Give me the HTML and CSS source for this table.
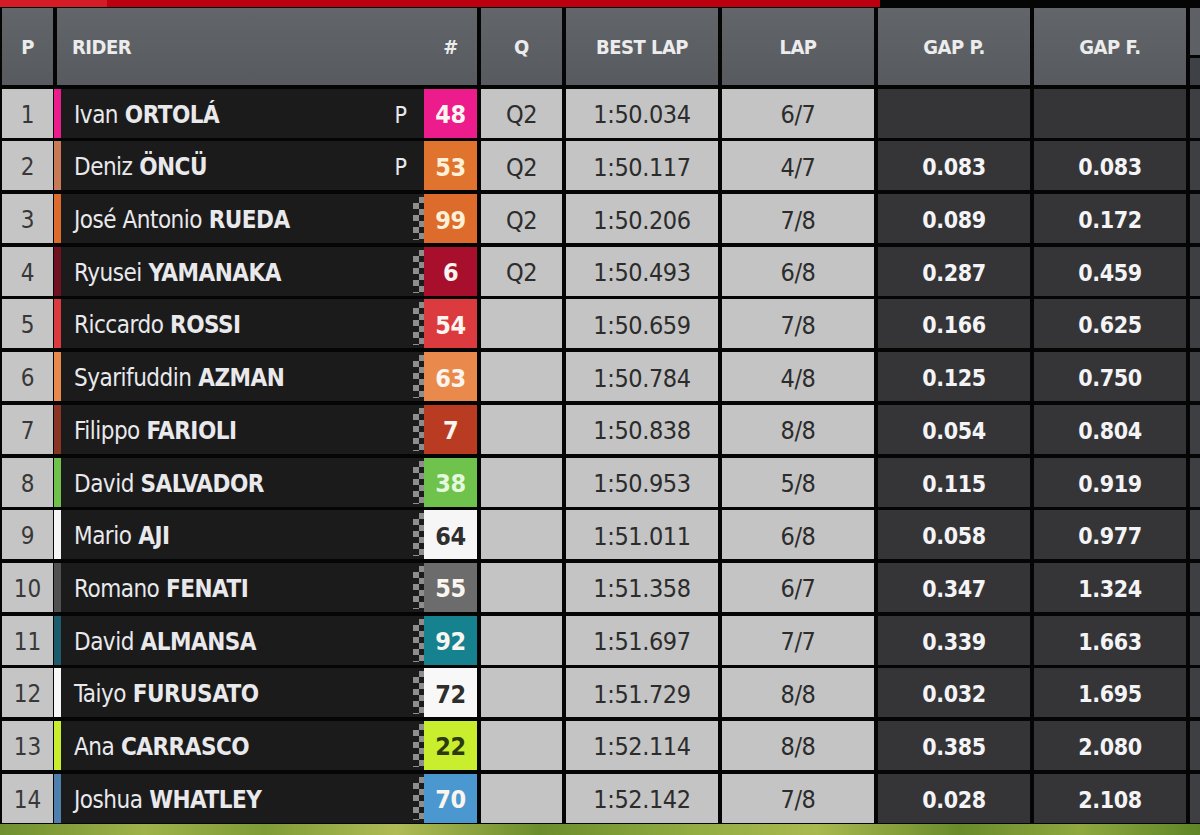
FILE: index.html
```html
<!DOCTYPE html>
<html lang="en">
<head>
<meta charset="utf-8">
<title>Timing</title>
<link rel="stylesheet" href="styles.css">
</head>
<body>
<div class="topbar"></div>
<div class="board">
  <div class="row head">
    <div class="hcell">P</div>
    <div class="hcell hrider"><span class="hname">RIDER</span><span class="hnum">#</span></div>
    <div class="hcell">Q</div>
    <div class="hcell">BEST LAP</div>
    <div class="hcell">LAP</div>
    <div class="hcell">GAP P.</div>
    <div class="hcell">GAP F.</div>
    <div class="hcell hextra"><div class="hx1"></div><div class="hx2"></div></div>
  </div>

  <div class="row">
    <div class="pos">1</div>
    <div class="rider"><span class="stripe c48"></span><span class="name">Ivan <b>ORTOLÁ</b></span><span class="pole">P</span><span class="num c48">48</span></div>
    <div class="lt">Q2</div><div class="lt">1:50.034</div><div class="lt">6/7</div>
    <div class="gap"></div><div class="gap"></div><div class="extra"></div>
  </div>
  <div class="row">
    <div class="pos">2</div>
    <div class="rider"><span class="stripe c53"></span><span class="name">Deniz <b>ÖNCÜ</b></span><span class="pole">P</span><span class="num c53">53</span></div>
    <div class="lt">Q2</div><div class="lt">1:50.117</div><div class="lt">4/7</div>
    <div class="gap">0.083</div><div class="gap">0.083</div><div class="extra"></div>
  </div>
  <div class="row">
    <div class="pos">3</div>
    <div class="rider"><span class="stripe c99"></span><span class="name">José Antonio <b>RUEDA</b></span><span class="flag"></span><span class="num c99">99</span></div>
    <div class="lt">Q2</div><div class="lt">1:50.206</div><div class="lt">7/8</div>
    <div class="gap">0.089</div><div class="gap">0.172</div><div class="extra"></div>
  </div>
  <div class="row">
    <div class="pos">4</div>
    <div class="rider"><span class="stripe c6"></span><span class="name">Ryusei <b>YAMANAKA</b></span><span class="flag"></span><span class="num c6">6</span></div>
    <div class="lt">Q2</div><div class="lt">1:50.493</div><div class="lt">6/8</div>
    <div class="gap">0.287</div><div class="gap">0.459</div><div class="extra"></div>
  </div>
  <div class="row">
    <div class="pos">5</div>
    <div class="rider"><span class="stripe c54"></span><span class="name">Riccardo <b>ROSSI</b></span><span class="flag"></span><span class="num c54">54</span></div>
    <div class="lt"></div><div class="lt">1:50.659</div><div class="lt">7/8</div>
    <div class="gap">0.166</div><div class="gap">0.625</div><div class="extra"></div>
  </div>
  <div class="row">
    <div class="pos">6</div>
    <div class="rider"><span class="stripe c63"></span><span class="name">Syarifuddin <b>AZMAN</b></span><span class="flag"></span><span class="num c63">63</span></div>
    <div class="lt"></div><div class="lt">1:50.784</div><div class="lt">4/8</div>
    <div class="gap">0.125</div><div class="gap">0.750</div><div class="extra"></div>
  </div>
  <div class="row">
    <div class="pos">7</div>
    <div class="rider"><span class="stripe c7"></span><span class="name">Filippo <b>FARIOLI</b></span><span class="flag"></span><span class="num c7">7</span></div>
    <div class="lt"></div><div class="lt">1:50.838</div><div class="lt">8/8</div>
    <div class="gap">0.054</div><div class="gap">0.804</div><div class="extra"></div>
  </div>
  <div class="row">
    <div class="pos">8</div>
    <div class="rider"><span class="stripe c38"></span><span class="name">David <b>SALVADOR</b></span><span class="flag"></span><span class="num c38">38</span></div>
    <div class="lt"></div><div class="lt">1:50.953</div><div class="lt">5/8</div>
    <div class="gap">0.115</div><div class="gap">0.919</div><div class="extra"></div>
  </div>
  <div class="row">
    <div class="pos">9</div>
    <div class="rider"><span class="stripe c64"></span><span class="name">Mario <b>AJI</b></span><span class="flag"></span><span class="num c64">64</span></div>
    <div class="lt"></div><div class="lt">1:51.011</div><div class="lt">6/8</div>
    <div class="gap">0.058</div><div class="gap">0.977</div><div class="extra"></div>
  </div>
  <div class="row">
    <div class="pos">10</div>
    <div class="rider"><span class="stripe c55"></span><span class="name">Romano <b>FENATI</b></span><span class="flag"></span><span class="num c55">55</span></div>
    <div class="lt"></div><div class="lt">1:51.358</div><div class="lt">6/7</div>
    <div class="gap">0.347</div><div class="gap">1.324</div><div class="extra"></div>
  </div>
  <div class="row">
    <div class="pos">11</div>
    <div class="rider"><span class="stripe c92"></span><span class="name">David <b>ALMANSA</b></span><span class="flag"></span><span class="num c92">92</span></div>
    <div class="lt"></div><div class="lt">1:51.697</div><div class="lt">7/7</div>
    <div class="gap">0.339</div><div class="gap">1.663</div><div class="extra"></div>
  </div>
  <div class="row">
    <div class="pos">12</div>
    <div class="rider"><span class="stripe c72"></span><span class="name">Taiyo <b>FURUSATO</b></span><span class="flag"></span><span class="num c72">72</span></div>
    <div class="lt"></div><div class="lt">1:51.729</div><div class="lt">8/8</div>
    <div class="gap">0.032</div><div class="gap">1.695</div><div class="extra"></div>
  </div>
  <div class="row">
    <div class="pos">13</div>
    <div class="rider"><span class="stripe c22"></span><span class="name">Ana <b>CARRASCO</b></span><span class="flag"></span><span class="num c22">22</span></div>
    <div class="lt"></div><div class="lt">1:52.114</div><div class="lt">8/8</div>
    <div class="gap">0.385</div><div class="gap">2.080</div><div class="extra"></div>
  </div>
  <div class="row">
    <div class="pos">14</div>
    <div class="rider"><span class="stripe c70"></span><span class="name">Joshua <b>WHATLEY</b></span><span class="flag"></span><span class="num c70">70</span></div>
    <div class="lt"></div><div class="lt">1:52.142</div><div class="lt">7/8</div>
    <div class="gap">0.028</div><div class="gap">2.108</div><div class="extra"></div>
  </div>
</div>
<div class="grass"></div>
</body>
</html>
```

FILE: styles.css
```css
html, body {
  margin: 0;
  padding: 0;
}
body {
  width: 1200px;
  height: 835px;
  overflow: hidden;
  background: #050505;
  font-family: "DejaVu Sans Condensed", "DejaVu Sans", sans-serif;
  font-stretch: condensed;
}
.topbar {
  width: 880px;
  height: 7px;
  margin-bottom: 1px;
  background: linear-gradient(90deg, #d41c26 0, #d41c26 107px, #bd0010 107px, #bd0010 100%);
}
.board {
  display: flex;
  flex-direction: column;
  gap: 3.7px;
  padding-left: 2px;
}
.row {
  display: grid;
  grid-template-columns: 51px 420px 81px 152px 152px 152px 152px 30px;
  column-gap: 4px;
  height: 49px;
}
.row.head {
  height: 77px;
}
.hcell {
  background: linear-gradient(#62666b, #575b60);
  color: #ececec;
  font-weight: bold;
  font-size: 20px;
  letter-spacing: -0.5px;
  display: flex;
  align-items: center;
  justify-content: center;
}
.hrider {
  justify-content: space-between;
  padding-left: 15px;
}
.hnum {
  width: 53px;
  text-align: center;
}
.hextra {
  flex-direction: column;
  align-items: stretch;
  background: #050505;
}
.hx1 {
  height: 47px;
  background: #5d6166;
}
.hx2 {
  flex: 1;
  margin-top: 3px;
  background: #3e4146;
}
.pos {
  background: #c5c5c5;
  color: #383838;
  font-size: 24px;
  padding-top: 3px;
  display: flex;
  align-items: center;
  justify-content: center;
}
.rider {
  background: #1b1b1c;
  display: flex;
  align-items: stretch;
  color: #e9e9ec;
}
.stripe {
  width: 7px;
  margin-left: -3px;
  flex: none;
}
.name {
  flex: 1;
  display: flex;
  align-items: center;
  padding-left: 13px;
  padding-top: 3px;
  font-size: 24px;
  letter-spacing: -0.5px;
  white-space: nowrap;
}
.name b {
  margin-left: 0.28em;
  font-weight: bold;
}
.pole {
  display: flex;
  align-items: center;
  font-size: 23px;
  padding-top: 3px;
  padding-right: 17px;
}
.flag {
  width: 11px;
  margin: 3px 0;
  flex: none;
  background: conic-gradient(#8e8e8e 0 25%, #1b1b1c 0 50%, #8e8e8e 0 75%, #1b1b1c 0) 0 0 / 12px 12px;
}
.num {
  width: 53px;
  flex: none;
  display: flex;
  align-items: center;
  justify-content: center;
  padding-top: 3px;
  font-weight: bold;
  font-size: 25px;
  color: #fbf5f0;
  letter-spacing: -0.5px;
}
.lt {
  background: #c4c4c4;
  color: #2c2c2c;
  font-size: 25px;
  letter-spacing: -0.4px;
  padding-top: 3px;
  display: flex;
  align-items: center;
  justify-content: center;
}
.gap {
  background: #353538;
  color: #f4f4f6;
  font-weight: bold;
  font-size: 23px;
  letter-spacing: -0.4px;
  padding-top: 3px;
  display: flex;
  align-items: center;
  justify-content: center;
}
.extra {
  background: #3d3f43;
}
.grass {
  height: 13px;
  margin-top: 1px;
  background: linear-gradient(90deg, #6f8f2e 0%, #9fb24a 12%, #7f9c36 22%, #b0bb55 33%, #6c8d2c 45%, #93ad42 58%, #a9b950 68%, #6a8b2b 80%, #8fa83f 90%, #5f8527 100%);
}

.c48 { background: #ec1c8c; }
.c53 { background: #e0732e; color: #fff0d8; }
.stripe.c53 { background: #c87a56; }
.c99 { background: #dd6b2b; color: #fff0d8; }
.c6 { background: #a80f2c; }
.stripe.c6 { background: #701222; }
.c54 { background: #db3b3e; }
.c63 { background: #e98a4c; }
.c7 { background: #b93c22; }
.stripe.c7 { background: #8a3424; }
.c38 { background: #6fc24c; color: #e4f8dc; }
.c64 { background: #f6f6f6; color: #2e2e2e; }
.c55 { background: #6c6c6c; }
.stripe.c55 { background: #505050; }
.c92 { background: #168290; }
.stripe.c92 { background: #1d5c6c; }
.c72 { background: #f8f8f8; color: #2e2e2e; }
.c22 { background: #c9ee2e; color: #2d3a10; }
.c70 { background: #4b97cf; }
.stripe.c70 { background: #4f7fae; }
```
